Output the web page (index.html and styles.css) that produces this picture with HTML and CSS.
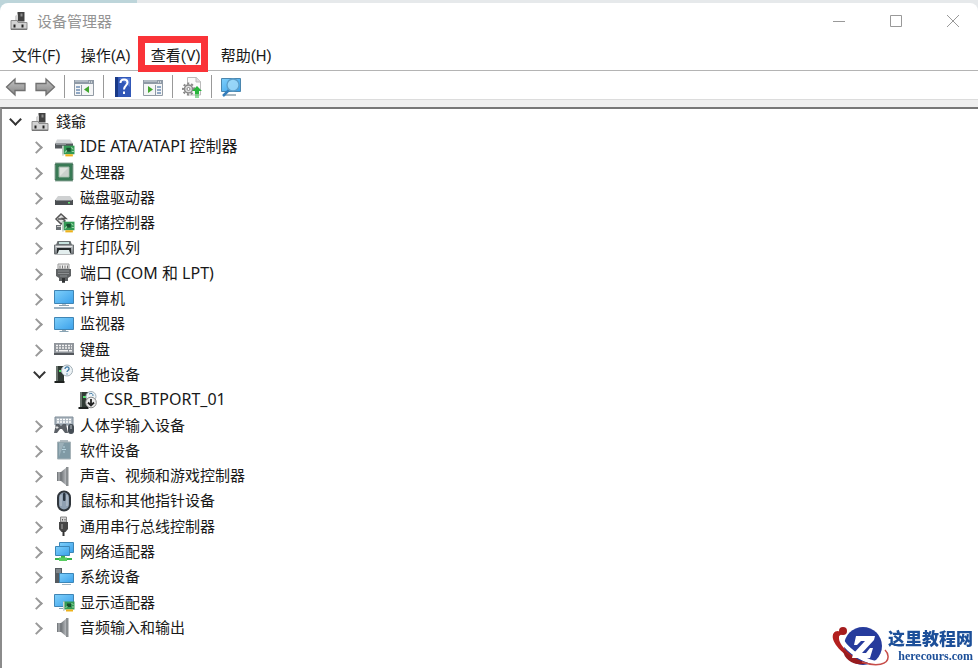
FILE: index.html
```html
<!DOCTYPE html>
<html lang="zh-CN">
<head>
<meta charset="utf-8">
<title>设备管理器</title>
<link rel="stylesheet" href="styles.css">
</head>
<body>
<svg class="sprite" width="0" height="0" aria-hidden="true">
  <defs>
    <linearGradient id="g-screen" x1="0" y1="0" x2="1" y2="1"><stop offset="0" stop-color="#7fd0fb"/><stop offset="1" stop-color="#3aa0ea"/></linearGradient>
    <linearGradient id="g-metal" x1="0" y1="0" x2="0" y2="1"><stop offset="0" stop-color="#c9cdd0"/><stop offset="1" stop-color="#6d7276"/></linearGradient>
    <linearGradient id="g-arrow" x1="0" y1="0" x2="0" y2="1"><stop offset="0" stop-color="#c4c4c4"/><stop offset="1" stop-color="#858585"/></linearGradient>
    <linearGradient id="g-speaker" x1="0" y1="0" x2="1" y2="0"><stop offset="0" stop-color="#6f7377"/><stop offset="1" stop-color="#c2c5c8"/></linearGradient>
  </defs>
  <symbol id="i-host" viewBox="0 0 22 22">
    <path d="M9.500 2h7v9.500h-7z" fill="#424242"/><path d="M12.500 3.500h2v3h-2z" fill="#8c8c8c"/><path d="M7 6l3-2v6H7z" fill="#d6d6d6"/>
    <path d="M3 10.500h6l1 2h9v7H3z" fill="#d2d2d2" stroke="#8d8d8d"/><path d="M3 18.500h16v1.500H3z" fill="#777"/>
    <path d="M5.500 14.500h2v3h-2zM13.500 14.500h2v3h-2z" fill="#222"/>
  </symbol>
  <symbol id="i-card" viewBox="0 0 14 12">
    <path d="M2 1.500h11.500v8H2z" fill="#349a55"/><path d="M2 1.500h1.500V11H2z" fill="#cfd4d0"/><path d="M5 9.500h7v2H5z" fill="#eeb21b"/><path d="M6 3.500h4v3.500H6z" fill="#174d2d"/><path d="M4.500 8l2-2M10.500 3l2 2M11 7h2" stroke="#9bd7a8"/>
  </symbol>
  <symbol id="i-ide" viewBox="0 0 22 22">
    <path d="M4 3.500h13l3 4H2z" fill="#d3d6d8"/><path d="M2 7.500h18v5H2z" fill="#54595d"/><path d="M3 7.500h10V9H3z" fill="#8d9397"/>
    <use href="#i-card" x="7" y="8" width="15" height="13"/>
  </symbol>
  <symbol id="i-cpu" viewBox="0 0 22 22">
    <path d="M2.500 2.500h17v17h-17z" fill="#316f4c" stroke="#285d40" stroke-width="2" stroke-dasharray="1 1"/>
    <path d="M3 3h16v16H3z" fill="#397a55"/><path d="M6 6h10v10H6z" fill="#dfe3de" stroke="#9ab4a3"/><path d="M7 15l8-8v8z" fill="#cbd1cc"/>
  </symbol>
  <symbol id="i-disk" viewBox="0 0 22 22">
    <path d="M5 10h12l3 4H2z" fill="#cfd1d2"/><path d="M2 14h18v5H2z" fill="#4b4f52"/><path d="M3 14h16v1H3z" fill="#85898c"/><path d="M15 16h2v1.500h-2z" fill="#68dc76"/>
  </symbol>
  <symbol id="i-storage" viewBox="0 0 22 22">
    <path d="M8 2l5 4.500H9.500L12 9l-4 3-5-5z" fill="#e2e2e2" stroke="#555" stroke-width="1.500"/><path d="M5 7h5" stroke="#555" stroke-width="1.500"/>
    <path d="M3 13h5v5H3z" fill="#6b7074"/><path d="M4 14h4v1H4z" fill="#ccc"/>
    <use href="#i-card" x="7" y="8" width="15" height="13"/>
  </symbol>
  <symbol id="i-printer" viewBox="0 0 22 22">
    <path d="M4.500 4h13l1.500 4H3z" fill="#6a7073"/><path d="M6 5h10v2H6z" fill="#c8e3df"/><path d="M1.500 8h19v9h-19z" fill="url(#g-metal)" stroke="#6c7174"/>
    <path d="M4 11h14v5H4z" fill="#262a2c"/><path d="M6 13h10l1.500 4h-13z" fill="#e3eeee"/><path d="M3 9.500h16" stroke="#e8e8e8"/>
  </symbol>
  <symbol id="i-port" viewBox="0 0 22 22">
    <path d="M5 2h11v5H5z" fill="#eee" stroke="#999"/><path d="M7 3.500v3M9.500 3.500v3M12 3.500v3M14.500 3.500v3" stroke="#777"/>
    <path d="M3 7h15v7l-3 2v3h-3v2H9v-2H6v-3l-3-2z" fill="#5f6264"/><path d="M5 9h11M5 11.500h11M7 14h7" stroke="#8b8e90"/><path d="M9 16h3v4H9z" fill="#303234"/>
  </symbol>
  <symbol id="i-computer" viewBox="0 0 22 22">
    <path d="M1.500 2.500h19v13h-19z" fill="url(#g-screen)" stroke="#4085b4"/><path d="M9 16h4v1.500H9z" fill="#b9c5cd"/><path d="M6 17.500h10" stroke="#8ba0ae"/><path d="M1 20h20" stroke="#7c99ae" stroke-width="1.500"/>
  </symbol>
  <symbol id="i-monitor" viewBox="0 0 22 22">
    <path d="M1.500 4.500h19v12h-19z" fill="url(#g-screen)" stroke="#4085b4"/><path d="M9 17h4v1H9z" fill="#9eafb9"/><path d="M6.500 18.500h9" stroke="#88a4b5"/>
  </symbol>
  <symbol id="i-keyboard" viewBox="0 0 22 22">
    <path d="M1 5h20v12H1z" fill="#90959b"/><path d="M1 15h20v2H1z" fill="#55595e"/>
    <path d="M3 7.500h16M3 10h16" stroke="#f4f4f4" stroke-width="1.500" stroke-dasharray="2 1"/><path d="M3 12.800h2M6 12.800h9M16 12.800h3" stroke="#f4f4f4" stroke-width="1.500"/>
  </symbol>
  <symbol id="i-tower" viewBox="0 0 22 22">
    <path d="M3 3h8v15H3z" fill="#303a34"/><path d="M3 3h2v15H3z" fill="#69736d"/><path d="M1.500 18h10v2h-10z" fill="#1e2220"/><path d="M6 7h3v2H6z" fill="#51df6b"/>
  </symbol>
  <symbol id="i-unknown" viewBox="0 0 22 22">
    <use href="#i-tower"/><circle cx="14" cy="7.500" r="5.500" fill="#edf3f6" stroke="#a4b0b7"/><path d="M12 6c0-3 4.500-2.500 4 0-.3 1.500-2 1.400-2 3M14 10.500v1" fill="none" stroke="#457da7" stroke-width="1.300"/>
  </symbol>
  <symbol id="i-device" viewBox="0 0 22 22">
    <use href="#i-tower"/><circle cx="14" cy="7.500" r="5" fill="#edf3f6" stroke="#a4b0b7"/><path d="M12 5q4-2 4 2" fill="none" stroke="#457da7"/>
    <circle cx="14" cy="13.500" r="5.300" fill="#eee" stroke="#888"/><path d="M14 10v6M11 13.500l3 3 3-3" fill="none" stroke="#252525" stroke-width="1.800"/>
  </symbol>
  <symbol id="i-hid" viewBox="0 0 22 22">
    <path d="M2 3h18v8H2z" fill="#aeb8c1" stroke="#7e8c98"/><path d="M4 5.500h14M4 8h14" stroke="#fff" stroke-width="1.500" stroke-dasharray="2 1"/>
    <path d="M3 10h3l2 2 2-2h3l2 9h-3l-3-4H7l-3 4H1z" fill="#5b6066"/><path d="M4 12v3M2.500 13.500h3" stroke="#ddd"/>
    <rect x="15" y="10" width="6" height="10" rx="3" fill="#454d55"/><path d="M18 11v4" stroke="#c1c8ce"/>
  </symbol>
  <symbol id="i-software" viewBox="0 0 22 22">
    <path d="M7 1h8v3H7z" fill="#b1bcc1"/><path d="M4.500 3h13v17h-13z" fill="#809aa5" stroke="#a7b3b8"/><path d="M6 4h5l-5 14z" fill="#9bb0b9"/><path d="M11 7v2M11 12v2M9 10.500h4" stroke="#b8d5e0"/>
  </symbol>
  <symbol id="i-speaker" viewBox="0 0 22 22">
    <path d="M4 7h4v9H4z" fill="#777b7f"/><path d="M8 7l6-5v19l-6-5z" fill="url(#g-speaker)"/><path d="M13 2h2.500v19H13z" fill="#8a8e91"/><path d="M6 7v9" stroke="#bfc2c4"/>
  </symbol>
  <symbol id="i-mouse" viewBox="0 0 22 22">
    <rect x="5" y="1.500" width="12" height="19" rx="6" fill="#8fa0b2" stroke="#30363c" stroke-width="2"/><path d="M8 5v11M14 5v11" stroke="#c0cad4"/><rect x="10" y="3" width="2.500" height="8" rx="1" fill="#283440"/>
  </symbol>
  <symbol id="i-usb" viewBox="0 0 22 22">
    <path d="M7.500 2h6v5h-6z" fill="#d4d4d4" stroke="#888"/><path d="M9 4h1v1.500H9zM11.500 4h1v1.500h-1z" fill="#555"/><path d="M6 7h9v7l-2.500 3h-4L6 14z" fill="#464646"/><path d="M8 9h2v5H8z" fill="#777"/><path d="M10.500 16v5" stroke="#333" stroke-width="2"/>
  </symbol>
  <symbol id="i-network" viewBox="0 0 22 22">
    <path d="M6.500 1.500h14v10h-14z" fill="url(#g-screen)" stroke="#3c86b7"/><path d="M2.500 5.500h14v9h-14z" fill="url(#g-screen)" stroke="#3c86b7"/>
    <path d="M8 15h4v2h7v2H2v-2h6z" fill="#38b24b"/><path d="M6 16.500h8v3.500H6z" fill="#58cd61"/>
  </symbol>
  <symbol id="i-system" viewBox="0 0 22 22">
    <path d="M2 2h7v15H2z" fill="#555b60"/><path d="M3 4h5M3 6h5" stroke="#a8b0b5"/><path d="M6.500 7.500h14v9h-14z" fill="url(#g-screen)" stroke="#3c86b7"/><path d="M9 18.500h9" stroke="#9eb4c2"/>
  </symbol>
  <symbol id="i-display" viewBox="0 0 22 22">
    <path d="M1.500 3.500h19v12h-19z" fill="url(#g-screen)" stroke="#4085b4"/><path d="M6 17.500h5" stroke="#88a4b5"/><use href="#i-card" x="8" y="9" width="14" height="12"/>
  </symbol>
</svg>

<main class="window">
  <header class="titlebar">
    <svg class="icon"><use href="#i-host"/></svg>
    <h1 class="title">设备管理器</h1>
    <button class="caption" aria-label="最小化"><svg viewBox="0 0 14 14"><path d="M1 7.500h12"/></svg></button>
    <button class="caption" aria-label="最大化"><svg viewBox="0 0 14 14"><path d="M1.500 1.500h11v11h-11z"/></svg></button>
    <button class="caption" aria-label="关闭"><svg viewBox="0 0 14 14"><path d="M1 1l12 12M13 1L1 13"/></svg></button>
  </header>
  <nav class="menubar">
    <button>文件(F)</button><button>操作(A)</button><button class="marked">查看(V)</button><button>帮助(H)</button>
  </nav>
  <div class="toolbar" role="toolbar">
    <button aria-label="后退"><svg viewBox="0 0 22 22"><path d="M1.500 11L10 3v4.500h10v7H10V19z" fill="url(#g-arrow)" stroke="#707070" stroke-width="1.300"/></svg></button>
    <button class="forward" aria-label="前进"><svg viewBox="0 0 22 22"><path d="M20.500 11L12 3v4.500H2v7h10V19z" fill="url(#g-arrow)" stroke="#707070" stroke-width="1.300"/></svg></button>
    <span class="divider"></span>
    <button aria-label="显示控制台树"><svg viewBox="0 0 22 22"><path d="M1.500 4.500h19v15h-19z" fill="#f4f5f6" stroke="#929ba4"/><path d="M1 4h20v4H1z" fill="#8f9aa6"/><path d="M2 5h13" stroke="#d3dae0"/><path d="M16 6h1M18 6h1" stroke="#fff"/><path d="M8.500 9v10" stroke="#8f9aa6"/><path d="M3 11h4M3 14h4M3 17h4" stroke="#6f8fb5" stroke-width="1.500"/><path d="M16 10v7l-5-3.500z" fill="#42a62e"/></svg></button>
    <span class="divider"></span>
    <button aria-label="帮助"><svg viewBox="0 0 22 22"><path d="M3 1h16v20H3z" fill="#3157b7"/><path d="M3 1h3v20H3z" fill="#193987"/><path d="M7 2h11v9z" fill="#5277d2"/><path d="M8.500 7c0-5 7-4.500 7-.5 0 3-3.500 3-3.500 7M12 15.500V18" fill="none" stroke="#fff" stroke-width="2"/></svg></button>
    <button class="actions" aria-label="显示操作窗格"><svg viewBox="0 0 22 22"><path d="M1.500 4.500h19v15h-19z" fill="#f4f5f6" stroke="#929ba4"/><path d="M1 4h20v4H1z" fill="#8f9aa6"/><path d="M2 5h13" stroke="#d3dae0"/><path d="M16 6h1M18 6h1" stroke="#fff"/><path d="M13.500 9v10" stroke="#8f9aa6"/><path d="M15 11h4M15 14h4M15 17h4" stroke="#6f8fb5" stroke-width="1.500"/><path d="M6 10v7l5-3.500z" fill="#42a62e"/></svg></button>
    <span class="divider"></span>
    <button aria-label="扫描检测硬件改动"><svg viewBox="0 0 22 22"><path d="M6.500 1.500h9l4 4V19h-13z" fill="#fafafa" stroke="#bbb"/><path d="M15 1v5h5" fill="#ddd" stroke="#bbb"/><circle cx="7.500" cy="13" r="5.500" fill="none" stroke="#888" stroke-width="2" stroke-dasharray="2 2"/><circle cx="7.500" cy="13" r="4" fill="#ddd" stroke="#888" stroke-width="1.500"/><circle cx="7.500" cy="13" r="1.500" fill="#fff" stroke="#888"/><path d="M16 10l5 5h-3v3h-4v-3h-3z" fill="#29b63c"/><path d="M14 19h4M14 21h4" stroke="#29b63c"/></svg></button>
    <span class="divider"></span>
    <button aria-label="查找设备"><svg viewBox="0 0 22 22"><path d="M1.500 2.500h19v13h-19z" fill="url(#g-screen)" stroke="#4b86ae"/><path d="M4 19h12" stroke="#a9b8c1" stroke-width="2"/><path d="M9 14l-6 6" stroke="#347dbb" stroke-width="2.500"/><circle cx="13" cy="9" r="6" fill="#a5dcf9" fill-opacity=".8" stroke="#5c9ec9" stroke-width="1.300"/></svg></button>
  </div>
  <ul class="tree" role="tree">
    <li class="root open" role="treeitem" aria-level="1" aria-expanded="true"><button aria-label="折叠"></button><svg class="icon"><use href="#i-host"/></svg>錢爺</li>
    <li class="latin" role="treeitem" aria-level="2"><button aria-label="展开"></button><svg class="icon"><use href="#i-ide"/></svg>IDE ATA/ATAPI 控制器</li>
    <li role="treeitem" aria-level="2"><button aria-label="展开"></button><svg class="icon"><use href="#i-cpu"/></svg>处理器</li>
    <li role="treeitem" aria-level="2"><button aria-label="展开"></button><svg class="icon"><use href="#i-disk"/></svg>磁盘驱动器</li>
    <li role="treeitem" aria-level="2"><button aria-label="展开"></button><svg class="icon"><use href="#i-storage"/></svg>存储控制器</li>
    <li role="treeitem" aria-level="2"><button aria-label="展开"></button><svg class="icon"><use href="#i-printer"/></svg>打印队列</li>
    <li class="latin" role="treeitem" aria-level="2"><button aria-label="展开"></button><svg class="icon"><use href="#i-port"/></svg>端口 (COM 和 LPT)</li>
    <li role="treeitem" aria-level="2"><button aria-label="展开"></button><svg class="icon"><use href="#i-computer"/></svg>计算机</li>
    <li role="treeitem" aria-level="2"><button aria-label="展开"></button><svg class="icon"><use href="#i-monitor"/></svg>监视器</li>
    <li role="treeitem" aria-level="2"><button aria-label="展开"></button><svg class="icon"><use href="#i-keyboard"/></svg>键盘</li>
    <li class="open" role="treeitem" aria-level="2" aria-expanded="true"><button aria-label="折叠"></button><svg class="icon"><use href="#i-unknown"/></svg>其他设备</li>
    <li class="leaf latin" role="treeitem" aria-level="3"><svg class="icon"><use href="#i-device"/></svg>CSR_BTPORT_01</li>
    <li role="treeitem" aria-level="2"><button aria-label="展开"></button><svg class="icon"><use href="#i-hid"/></svg>人体学输入设备</li>
    <li role="treeitem" aria-level="2"><button aria-label="展开"></button><svg class="icon"><use href="#i-software"/></svg>软件设备</li>
    <li role="treeitem" aria-level="2"><button aria-label="展开"></button><svg class="icon"><use href="#i-speaker"/></svg>声音、视频和游戏控制器</li>
    <li role="treeitem" aria-level="2"><button aria-label="展开"></button><svg class="icon"><use href="#i-mouse"/></svg>鼠标和其他指针设备</li>
    <li role="treeitem" aria-level="2"><button aria-label="展开"></button><svg class="icon"><use href="#i-usb"/></svg>通用串行总线控制器</li>
    <li role="treeitem" aria-level="2"><button aria-label="展开"></button><svg class="icon"><use href="#i-network"/></svg>网络适配器</li>
    <li role="treeitem" aria-level="2"><button aria-label="展开"></button><svg class="icon"><use href="#i-system"/></svg>系统设备</li>
    <li role="treeitem" aria-level="2"><button aria-label="展开"></button><svg class="icon"><use href="#i-display"/></svg>显示适配器</li>
    <li role="treeitem" aria-level="2"><button aria-label="展开"></button><svg class="icon"><use href="#i-speaker"/></svg>音频输入和输出</li>
  </ul>
</main>
<aside class="brand">
  <svg viewBox="0 0 58 40" width="58" height="40" aria-hidden="true">
    <circle cx="31" cy="20" r="19" fill="#263b9c"/>
    <path d="M8 8c0 9 14 22 29 27 8 3 15 2 18-3" fill="none" stroke="#fff" stroke-width="4"/>
    <path d="M6 5c-4 0-6 3-5 8 3 10 17 21 32 25-14-8-27-19-26-27 0-2 3-3 6-3z" fill="#b3201f"/>
    <circle cx="11" cy="5" r="4" fill="#a51d1e"/>
    <path d="M11 24c1 11 13 17 25 13-9-2-18-7-25-13z" fill="#971b1e"/>
    <path d="M30 36c14 5 27 3 26-6 0-2-1-4-3-6" fill="none" stroke="#c74d49" stroke-width="1.500"/>
    <path d="M24 10h19l-1 4-12 13h4l4-5h3l-3 10H20l1-4 12-13h-4l-4 4h-3z" fill="#fff"/>
  </svg>
  <div class="brand-text"><strong>这里教程网</strong><span>herecours.com</span></div>
</aside>
</body>
</html>
```
FILE: styles.css
```css
* { box-sizing: border-box; }

body {
  margin: 0;
  min-height: 100vh;
  padding-top: 3px;
  display: flex;
  background: linear-gradient(90deg, #bdd5da 137px, #e6e9eb 137px);
  color: #191919;
  font: 15px/25px "Noto Sans", "Noto Sans CJK SC", sans-serif;
}

button {
  padding: 0;
  border: 0;
  background: none;
  color: inherit;
  font: inherit;
}

.sprite { position: absolute; }

.icon {
  width: 22px;
  height: 22px;
  flex: none;
}

.window {
  flex: 1;
  display: flex;
  flex-direction: column;
  border-radius: 8px 8px 0 0;
  background: #fff;
}

.titlebar {
  display: flex;
  align-items: center;
  height: 36px;
  padding-left: 8px;
}

.title {
  flex: 1;
  margin: 0 0 0 7px;
  color: #949494;
  font-size: 15px;
  font-weight: 400;
}

.caption {
  display: grid;
  place-items: center;
  width: 57px;
  height: 36px;
}

.caption:last-child {
  width: 54px;
  padding-left: 4px;
}

.caption svg {
  width: 14px;
  height: 14px;
  fill: none;
  stroke: #999;
}

.menubar {
  display: flex;
  align-items: center;
  gap: 20px;
  height: 32px;
  padding: 4px 0 0 12px;
  border-bottom: 1px solid #b4b4b4;
  font-family: Roboto, "Noto Sans CJK SC", sans-serif;
}

.marked { position: relative; }

.marked::after {
  content: "";
  position: absolute;
  inset: -8px -7px -3px -13px;
  border: 7px solid #fa3338;
}

.toolbar {
  display: flex;
  align-items: center;
  height: 29px;
  padding: 3px 0 0 5px;
  border-bottom: 1px solid #dcdcdc;
}

.toolbar button,
.toolbar svg {
  display: block;
  width: 22px;
  height: 22px;
}

.toolbar .forward { margin-left: 7px; }
.toolbar .actions { margin-left: 8px; }

.divider {
  width: 1px;
  height: 23px;
  margin: 0 8px;
  background: #999;
}

.tree {
  flex: 1;
  display: flex;
  flex-direction: column;
  justify-content: space-between;
  margin: 7px 0 0;
  padding: 0 0 28px;
  border-left: 2px solid #8b8b8b;
  border-top: 2px solid #777;
  box-shadow: 0 -7px #efefef;
  list-style: none;
}

.tree li {
  display: flex;
  align-items: center;
  gap: 5px;
  height: 25px;
  padding-left: 27px;
  white-space: pre;
}

.tree .root { padding-left: 3px; }
.tree .leaf { padding-left: 75px; }
.tree .latin { font-size: 16px; }

.tree button {
  display: grid;
  place-items: center;
  width: 19px;
  height: 25px;
  padding: 2px 4px 0 0;
}

.tree button::before {
  content: "";
  width: 7px;
  height: 7px;
  border: solid #999;
  border-width: 2px 2px 0 0;
  transform: rotate(45deg);
}

.tree .open button { padding: 0 0 4px 1px; }

.tree .open button::before {
  border-color: #333;
  transform: rotate(135deg);
}

.brand {
  position: fixed;
  right: 5px;
  bottom: 2px;
  display: flex;
  align-items: center;
  color: #1c4f99;
}

.brand-text {
  display: flex;
  flex-direction: column;
  align-items: flex-end;
  margin-left: -2px;
}

.brand strong {
  font: 900 17px/20px "Noto Sans CJK SC", sans-serif;
}

.brand span {
  font: bold 12px/16px "Liberation Serif", serif;
}
```
